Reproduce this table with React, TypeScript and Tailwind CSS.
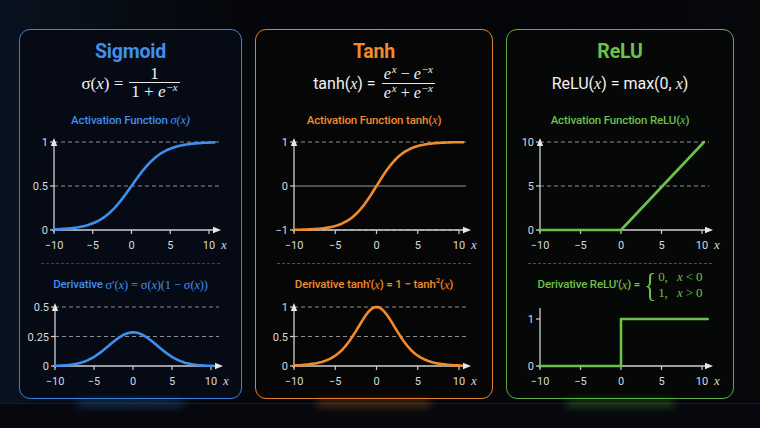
import React from 'react';

const SERIF = "font-['Liberation_Serif',serif]";
const SANS = "font-['Roboto',sans-serif]";

const X = () => <i className={SERIF}>x</i>;

type Tick = { v: number; label: string; grid?: 'dash' | 'solid' };

type ChartProps = {
  w: number;
  h: number;
  x0: number;
  x10: number;
  arrowX: number;
  gridX: number;
  yb: number;
  yt: number;
  ymin: number;
  ymax: number;
  axisTop: number;
  arrowUp?: boolean;
  labelY: number;
  ticks: Tick[];
  color: string;
  pts: [number, number][];
};

const sample = (f: (x: number) => number, end: number): [number, number][] => {
  const out: [number, number][] = [];
  for (let i = 0; i <= 120; i++) {
    const x = -10 + (i * (end + 10)) / 120;
    out.push([x, f(x)]);
  }
  return out;
};

function Chart(p: ChartProps) {
  const sx = (x: number) => p.x0 + ((x + 10) * (p.x10 - p.x0)) / 20;
  const sy = (y: number) => p.yb - ((y - p.ymin) * (p.yb - p.yt)) / (p.ymax - p.ymin);
  const d = p.pts
    .map(([x, y], i) => `${i ? 'L' : 'M'}${sx(x).toFixed(1)} ${sy(y).toFixed(1)}`)
    .join(' ');
  return (
    <svg width={p.w} height={p.h} className="block">
      {p.ticks.map((t) =>
        t.grid ? (
          <line
            key={'g' + t.v}
            x1={p.x0}
            x2={p.gridX}
            y1={sy(t.v)}
            y2={sy(t.v)}
            stroke={t.grid === 'dash' ? '#8d8d8d' : '#9c9c9c'}
            strokeWidth={1}
            strokeDasharray={t.grid === 'dash' ? '4 3' : undefined}
          />
        ) : null
      )}
      <line x1={p.x0 - 2} x2={p.arrowX - 5} y1={p.yb} y2={p.yb} stroke="#cfcfcf" strokeWidth={1.3} />
      <path d={`M${p.arrowX} ${p.yb} l-8 -3.2 v6.4 z`} fill="#e8e8e8" />
      <line
        x1={p.x0}
        x2={p.x0}
        y1={p.yb + 2}
        y2={p.axisTop + (p.arrowUp ? 5 : 0)}
        stroke="#cfcfcf"
        strokeWidth={1.3}
      />
      {p.arrowUp && <path d={`M${p.x0} ${p.axisTop} l-3.2 8 h6.4 z`} fill="#e8e8e8" />}
      {[-10, -5, 0, 5, 10].map((v) => (
        <g key={v}>
          <line x1={sx(v)} x2={sx(v)} y1={p.yb} y2={p.yb + 4} stroke="#cfcfcf" strokeWidth={1.2} />
          <text
            x={sx(v)}
            y={p.labelY}
            textAnchor="middle"
            fontSize={11}
            fontFamily="Roboto, sans-serif"
            fill="#dadada"
          >
            {v < 0 ? '−' + -v : v}
          </text>
        </g>
      ))}
      <text
        x={sx(10) + 15}
        y={p.labelY}
        textAnchor="middle"
        fontSize={13}
        fontStyle="italic"
        fontFamily="Liberation Serif, serif"
        fill="#dadada"
      >
        x
      </text>
      {p.ticks.map((t) => (
        <g key={'t' + t.v}>
          <line x1={p.x0 - 4} x2={p.x0} y1={sy(t.v)} y2={sy(t.v)} stroke="#cfcfcf" strokeWidth={1.2} />
          <text
            x={p.x0 - 6}
            y={sy(t.v) + 4}
            textAnchor="end"
            fontSize={11}
            fontFamily="Roboto, sans-serif"
            fill="#dadada"
          >
            {t.label}
          </text>
        </g>
      ))}
      <path d={d} fill="none" stroke={p.color} strokeWidth={2.6} strokeLinejoin="round" strokeLinecap="round" />
    </svg>
  );
}

const Frac = ({ n, d }: { n: React.ReactNode; d: React.ReactNode }) => (
  <span className="inline-flex flex-col items-center ml-[6px]">
    <span className="leading-[16px] px-[2px]">{n}</span>
    <span className="border-t border-[#e8e8e8] leading-[17px] px-[2px]">{d}</span>
  </span>
);

const Sup = ({ children }: { children: React.ReactNode }) => (
  <span className="relative -top-[6px] text-[11px] ml-[1px]">{children}</span>
);

type PanelProps = {
  w: string;
  border: string;
  bg: string;
  text: string;
  sep: string;
  glow: string;
  title: string;
  formula: React.ReactNode;
  label: React.ReactNode;
  chart1: React.ReactNode;
  deriv: React.ReactNode;
  chart2: React.ReactNode;
};

function Panel(p: PanelProps) {
  return (
    <div className={`relative ${p.w} h-[370px] shrink-0 rounded-[11px] border-[1.5px] ${p.border} ${p.bg} flex flex-col items-center pt-[10px]`}>
      <div className={`h-[24px] leading-[24px] text-[19.5px] font-bold tracking-[-0.2px] ${p.text} ${SANS}`}>{p.title}</div>
      <div className="h-[34px] mt-[3px] flex items-center text-[16px] text-[#f2f2f2]">{p.formula}</div>
      <div className={`h-[16px] mt-[11px] leading-[16px] text-[11.5px] font-medium tracking-[-0.15px] ${p.text} ${SANS}`}>
        {p.label}
      </div>
      <div className="mt-[7px] self-stretch">{p.chart1}</div>
      <div className={`mt-[8px] self-stretch mx-[21px] border-t border-dashed ${p.sep}`} />
      <div className={`h-[32px] mt-[5px] flex items-center text-[11.5px] font-medium tracking-[-0.15px] ${p.text} ${SANS}`}>
        {p.deriv}
      </div>
      <div className="mt-[-2px] self-stretch">{p.chart2}</div>
      <div className={`absolute -bottom-[7px] left-[26%] right-[26%] h-[3px] rounded-full blur-[4px] opacity-70 ${p.glow}`} />
    </div>
  );
}

const BLUE = '#3f8fef';
const ORANGE = '#f28b2b';
const GREEN = '#6cc14b';

const sigmoid = (x: number) => 1 / (1 + Math.exp(-x / 2));
const sigD = (x: number) => 0.285 * Math.exp(-(x * x) / (2 * 3.1 * 3.1));
const tanhF = (x: number) => Math.tanh(x / 3.3);
const tanhD = (x: number) => 1 - Math.tanh(x / 3.3) ** 2;

export default function App() {
  return (
    <div className="w-[760px] h-[428px] overflow-hidden bg-[linear-gradient(90deg,#09121f_0%,#05070c_30%,#040509_70%,#06080b_100%)] flex flex-col">
      <div className="flex gap-[13px] pl-[19px] pt-[29px]">
        <Panel
          w="w-[223px]"
          border="border-[#3b82d6]"
          bg="bg-[#050a14]"
          text="text-[#3f8fef]"
          sep="border-[#34475f]"
          glow="bg-[#2f86ff]"
          title="Sigmoid"
          formula={
            <span className={`${SERIF} flex items-center text-[17px]`}>
              <span>
                σ(<i>x</i>) =
              </span>
              <Frac
                n="1"
                d={
                  <>
                    1 + <i>e</i>
                    <Sup>
                      −<i>x</i>
                    </Sup>
                  </>
                }
              />
            </span>
          }
          label={
            <>
              Activation Function <i className={`${SERIF} font-normal text-[12.5px]`}>σ(x)</i>
            </>
          }
          chart1={
            <Chart
              w={220}
              h={120}
              x0={34}
              x10={189}
              arrowX={201}
              gridX={199}
              yb={95}
              yt={7}
              ymin={0}
              ymax={1}
              axisTop={3}
              arrowUp
              labelY={114}
              ticks={[
                { v: 1, label: '1', grid: 'dash' },
                { v: 0.5, label: '0.5', grid: 'dash' },
                { v: 0, label: '0' },
              ]}
              color={BLUE}
              pts={sample(sigmoid, 10.7)}
            />
          }
          deriv={
            <>
              Derivative&nbsp;
              <span className={`${SERIF} font-normal text-[12.5px]`}>
                σ′(<i>x</i>) = σ(<i>x</i>)(1 − σ(<i>x</i>))
              </span>
            </>
          }
          chart2={
            <Chart
              w={220}
              h={90}
              x0={35}
              x10={191}
              arrowX={203}
              gridX={199}
              yb={67}
              yt={8}
              ymin={0}
              ymax={0.5}
              axisTop={4}
              arrowUp
              labelY={86}
              ticks={[
                { v: 0.5, label: '0.5', grid: 'dash' },
                { v: 0.25, label: '0.25', grid: 'dash' },
                { v: 0, label: '0' },
              ]}
              color={BLUE}
              pts={sample(sigD, 10.3)}
            />
          }
        />
        <Panel
          w="w-[238px]"
          border="border-[#e0812c]"
          bg="bg-[#060606]"
          text="text-[#f28b2b]"
          sep="border-[#6e4a26]"
          glow="bg-[#ff8a22]"
          title="Tanh"
          formula={
            <span className="flex items-center">
              <span className={`${SANS} text-[16px]`}>
                tanh(<X />) =
              </span>
              <Frac
                n={
                  <span className={SERIF}>
                    <i>e</i>
                    <Sup>
                      <i>x</i>
                    </Sup>{' '}
                    − <i>e</i>
                    <Sup>
                      −<i>x</i>
                    </Sup>
                  </span>
                }
                d={
                  <span className={SERIF}>
                    <i>e</i>
                    <Sup>
                      <i>x</i>
                    </Sup>{' '}
                    + <i>e</i>
                    <Sup>
                      −<i>x</i>
                    </Sup>
                  </span>
                }
              />
            </span>
          }
          label={
            <>
              Activation Function tanh(<i className={`${SERIF} font-normal text-[12.5px]`}>x</i>)
            </>
          }
          chart1={
            <Chart
              w={235}
              h={120}
              x0={38}
              x10={203}
              arrowX={215}
              gridX={210}
              yb={95}
              yt={7}
              ymin={-1}
              ymax={1}
              axisTop={3}
              arrowUp
              labelY={114}
              ticks={[
                { v: 1, label: '1', grid: 'dash' },
                { v: 0, label: '0', grid: 'solid' },
                { v: -1, label: '−1', grid: 'dash' },
              ]}
              color={ORANGE}
              pts={sample(tanhF, 10.5)}
            />
          }
          deriv={
            <>
              Derivative&nbsp;tanh′(<i className={`${SERIF} font-normal text-[12.5px]`}>x</i>)&nbsp;=&nbsp;1&nbsp;−&nbsp;tanh
              <span className="relative -top-[4px] text-[8px]">2</span>(
              <i className={`${SERIF} font-normal text-[12.5px]`}>x</i>)
            </>
          }
          chart2={
            <Chart
              w={235}
              h={90}
              x0={38}
              x10={203}
              arrowX={215}
              gridX={210}
              yb={67}
              yt={8}
              ymin={0}
              ymax={1}
              axisTop={4}
              arrowUp
              labelY={86}
              ticks={[
                { v: 1, label: '1', grid: 'dash' },
                { v: 0.5, label: '0.5', grid: 'dash' },
                { v: 0, label: '0' },
              ]}
              color={ORANGE}
              pts={sample(tanhD, 10.3)}
            />
          }
        />
        <Panel
          w="w-[228px]"
          border="border-[#5fae45]"
          bg="bg-[#050806]"
          text="text-[#6cc14b]"
          sep="border-[#3b6230]"
          glow="bg-[#5fd23c]"
          title="ReLU"
          formula={
            <span className={`${SANS} text-[16px]`}>
              ReLU(<X />) = max(0, <X />)
            </span>
          }
          label={
            <>
              Activation Function ReLU(<i className={`${SERIF} font-normal text-[12.5px]`}>x</i>)
            </>
          }
          chart1={
            <Chart
              w={225}
              h={120}
              x0={33}
              x10={195}
              arrowX={206}
              gridX={202}
              yb={95}
              yt={7}
              ymin={0}
              ymax={10}
              axisTop={3}
              arrowUp
              labelY={114}
              ticks={[
                { v: 10, label: '10', grid: 'dash' },
                { v: 5, label: '5', grid: 'dash' },
                { v: 0, label: '0' },
              ]}
              color={GREEN}
              pts={[
                [-10, 0],
                [0, 0],
                [10.25, 10],
              ]}
            />
          }
          deriv={
            <span className="flex items-center">
              Derivative&nbsp;ReLU′(<i className={`${SERIF} font-normal text-[12.5px]`}>x</i>)&nbsp;=
              <span className={`${SERIF} font-normal text-[34px] leading-[34px] ml-[2px] scale-x-75`}>{'{'}</span>
              <span className={`${SERIF} font-normal text-[13px] leading-[16px] flex flex-col`}>
                <span>
                  0,&nbsp;&nbsp;&nbsp;<i>x</i> &lt; 0
                </span>
                <span>
                  1,&nbsp;&nbsp;&nbsp;<i>x</i> &gt; 0
                </span>
              </span>
            </span>
          }
          chart2={
            <Chart
              w={225}
              h={90}
              x0={33}
              x10={195}
              arrowX={206}
              gridX={202}
              yb={67}
              yt={20}
              ymin={0}
              ymax={1}
              axisTop={9}
              labelY={86}
              ticks={[
                { v: 1, label: '1' },
                { v: 0, label: '0' },
              ]}
              color={GREEN}
              pts={[
                [-10, 0],
                [0, 0],
                [0, 1],
                [10.7, 1],
              ]}
            />
          }
        />
      </div>
      <div className="mt-[4px] h-px bg-[#141a24]" />
      <div className="flex-1 bg-[#06080d]" />
    </div>
  );
}
